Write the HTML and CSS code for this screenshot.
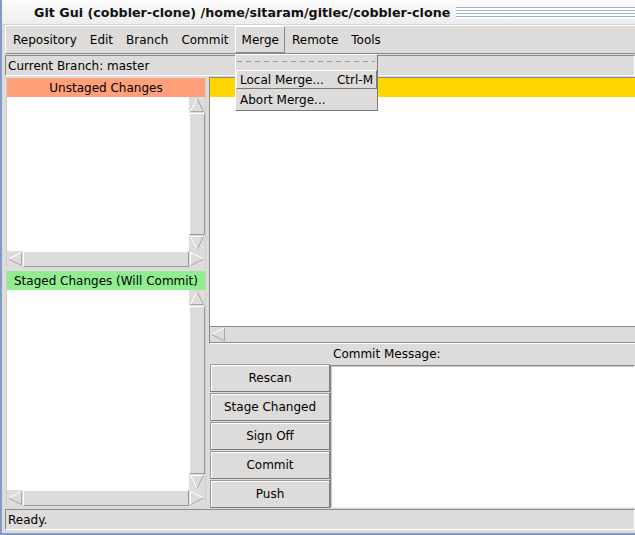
FILE: index.html
```html
<!DOCTYPE html>
<html>
<head>
<meta charset="utf-8">
<link rel="stylesheet" href="styles.css">
</head>
<body>
<div class="window">
  <div class="titlebar">
    <span class="title">Git Gui (cobbler-clone) /home/sitaram/gitlec/cobbler-clone</span>
    <span class="grip"></span>
  </div>
  <div class="content">
    <div class="menubar">
      <span class="mi">Repository</span>
      <span class="mi">Edit</span>
      <span class="mi">Branch</span>
      <span class="mi">Commit</span>
      <span class="mi active">Merge</span>
      <span class="mi">Remote</span>
      <span class="mi">Tools</span>
    </div>
    <div class="branchbar">Current Branch: master</div>
    <div class="main">
      <div class="left">
        <div class="pane upper">
          <div class="hdr unstaged">Unstaged Changes</div>
          <div class="listrow">
            <div class="list"></div>
            <div class="vscroll">
              <span class="arrow"><svg width="16" height="16" viewBox="0 0 16 16"><path d="M1.5 14.5 L8 1.5" stroke="#fff" fill="none"/><path d="M8 1.5 L14.5 14.5 H1.5" stroke="#a9a7a4" fill="none"/></svg></span>
              <span class="slider"></span>
              <span class="arrow"><svg width="16" height="16" viewBox="0 0 16 16"><path d="M14.5 1.5 H1.5 L8 14.5" stroke="#fff" fill="none"/><path d="M8 14.5 L14.5 1.5" stroke="#a9a7a4" fill="none"/></svg></span>
            </div>
          </div>
          <div class="hscroll">
            <span class="arrow"><svg width="16" height="16" viewBox="0 0 16 16"><path d="M14.5 1.5 L1.5 8" stroke="#fff" fill="none"/><path d="M1.5 8 L14.5 14.5 V1.5" stroke="#a9a7a4" fill="none"/></svg></span>
            <span class="slider"></span>
            <span class="arrow"><svg width="16" height="16" viewBox="0 0 16 16"><path d="M1.5 14.5 V1.5 L14.5 8" stroke="#fff" fill="none"/><path d="M14.5 8 L1.5 14.5" stroke="#a9a7a4" fill="none"/></svg></span>
          </div>
        </div>
        <div class="pane lower">
          <div class="hdr staged">Staged Changes (Will Commit)</div>
          <div class="listrow">
            <div class="list"></div>
            <div class="vscroll">
              <span class="arrow"><svg width="16" height="16" viewBox="0 0 16 16"><path d="M1.5 14.5 L8 1.5" stroke="#fff" fill="none"/><path d="M8 1.5 L14.5 14.5 H1.5" stroke="#a9a7a4" fill="none"/></svg></span>
              <span class="slider"></span>
              <span class="arrow"><svg width="16" height="16" viewBox="0 0 16 16"><path d="M14.5 1.5 H1.5 L8 14.5" stroke="#fff" fill="none"/><path d="M8 14.5 L14.5 1.5" stroke="#a9a7a4" fill="none"/></svg></span>
            </div>
          </div>
          <div class="hscroll">
            <span class="arrow"><svg width="16" height="16" viewBox="0 0 16 16"><path d="M14.5 1.5 L1.5 8" stroke="#fff" fill="none"/><path d="M1.5 8 L14.5 14.5 V1.5" stroke="#a9a7a4" fill="none"/></svg></span>
            <span class="slider"></span>
            <span class="arrow"><svg width="16" height="16" viewBox="0 0 16 16"><path d="M1.5 14.5 V1.5 L14.5 8" stroke="#fff" fill="none"/><path d="M14.5 8 L1.5 14.5" stroke="#a9a7a4" fill="none"/></svg></span>
          </div>
        </div>
      </div>
      <div class="right">
        <div class="diff">
          <div class="hdr diffhdr"></div>
          <div class="difftext"></div>
          <div class="hscroll diffscroll">
            <span class="arrow"><svg width="16" height="15" viewBox="0 0 16 15"><path d="M14.5 1 L1.5 7.5" stroke="#fff" fill="none"/><path d="M1.5 7.5 L14.5 14 V1" stroke="#a9a7a4" fill="none"/></svg></span>
            <span class="slider"></span>
          </div>
        </div>
        <div class="commit">
          <div class="cmlabel">Commit Message:</div>
          <div class="cmrow">
            <div class="buttons">
              <div class="btn">Rescan</div>
              <div class="btn">Stage Changed</div>
              <div class="btn">Sign Off</div>
              <div class="btn">Commit</div>
              <div class="btn">Push</div>
            </div>
            <div class="cmtext"></div>
          </div>
        </div>
      </div>
    </div>
    <div class="status">Ready.</div>
  </div>
  <div class="dropdown">
    <div class="tearoff"></div>
    <div class="mitem active"><span>Local Merge...</span><span>Ctrl-M</span></div>
    <div class="mitem"><span>Abort Merge...</span></div>
  </div>
</div>
</body>
</html>
```

FILE: styles.css
```css
* { box-sizing: border-box; }
html, body { margin: 0; padding: 0; }
body {
  width: 635px;
  height: 535px;
  overflow: hidden;
  background: #dedcda;
  font-family: "DejaVu Sans", sans-serif;
  font-size: 12px;
  color: #000;
}
.window {
  position: relative;
  width: 635px;
  height: 535px;
  display: flex;
  flex-direction: column;
  background: #dedcda;
  border-left: 2px solid #7f9bc6;
  border-bottom: 2px solid #7f9bc6;
}
.titlebar {
  height: 25px;
  flex: none;
  display: flex;
  align-items: center;
  background: linear-gradient(#fbfbfb, #ededed);
  border-bottom: 1px solid #d2d2d2;
}
.title {
  padding-left: 32px;
  font-weight: bold;
  font-size: 12.7px;
  white-space: nowrap;
  color: #111;
}
.grip {
  flex: 1;
  margin-left: 6px;
  height: 12px;
  margin-top: 1px;
  background: repeating-linear-gradient(to bottom, #9db2d2 0 1px, #ffffff 1px 3px);
}
.content {
  flex: 1;
  display: flex;
  flex-direction: column;
  padding-left: 3px;
  min-height: 0;
}
.menubar {
  height: 29px;
  flex: none;
  display: flex;
  align-items: stretch;
  border-top: 1px solid #fff;
  border-left: 1px solid #fff;
  border-bottom: 1px solid #8a8a8a;
}
.mi {
  display: flex;
  align-items: center;
  padding: 0 5px 0 6px;
  border: 1px solid transparent;
}
.mi.active {
  border-color: #fff #8a8a8a #8a8a8a #fff;
}
.branchbar {
  flex: none;
  margin-top: 1px;
  height: 21px;
  line-height: 21px;
  overflow: hidden;
  padding-left: 2px;
  border: 1px solid;
  border-color: #8a8a8a #fff #fff #8a8a8a;
}
.main {
  flex: 1;
  display: flex;
  margin-top: 1px;
  min-height: 0;
}
.left {
  width: 201px;
  flex: none;
  display: flex;
  flex-direction: column;
  padding: 1px 0 2px 1px;
}
.pane {
  display: flex;
  flex-direction: column;
  border-left: 1px solid #cfcdca;
  border-right: 1px solid #cfcdca;
}
.pane.upper { height: 189px; flex: none; margin-bottom: 4px; }
.pane.lower { flex: 1; }
.hdr {
  height: 19px;
  line-height: 21px;
  overflow: hidden;
  text-align: center;
  flex: none;
}
.unstaged { background: #ffa07a; }
.staged { background: #90ee90; }
.diffhdr { background: #ffd700; }
.listrow {
  flex: 1;
  display: flex;
  min-height: 0;
}
.list { flex: 1; background: #fff; }
.vscroll {
  width: 16px;
  flex: none;
  display: flex;
  flex-direction: column;
  background: #dedcda;
}
.hscroll {
  height: 16px;
  flex: none;
  display: flex;
  background: #dedcda;
}
.arrow {
  width: 16px;
  height: 16px;
  flex: none;
  display: block;
}
.arrow svg { display: block; }
.slider {
  flex: 1;
  border: 1px solid;
  border-color: #fff #9c9a97 #9c9a97 #fff;
}
.right {
  flex: 1;
  display: flex;
  flex-direction: column;
  margin-left: 3px;
  min-width: 0;
}
.diff {
  height: 267px;
  flex: none;
  display: flex;
  flex-direction: column;
  border-top: 1px solid #8a8a8a;
  border-left: 1px solid #8a8a8a;
  border-bottom: 1px solid #fff;
}
.difftext { flex: 1; background: #fff; }
.diffscroll {
  height: 17px;
  border-top: 1px solid #8a8a8a;
  border-bottom: 1px solid #8a8a8a;
}
.diffscroll .arrow { height: 15px; }
.diffscroll .slider { border-color: #dedcda; }
.commit {
  flex: 1;
  display: flex;
  flex-direction: column;
}
.cmlabel {
  height: 20px;
  line-height: 20px;
  padding-left: 124px;
  flex: none;
}
.cmrow {
  flex: 1;
  display: flex;
}
.buttons {
  width: 120px;
  flex: none;
  margin-left: 1px;
  display: flex;
  flex-direction: column;
  gap: 1px;
}
.btn {
  height: 28px;
  line-height: 26px;
  text-align: center;
  border: 1px solid;
  border-color: #9a9a9a #7a7a7a #7a7a7a #9a9a9a;
  box-shadow: inset 1px 1px 0 #fff;
}
.cmtext {
  flex: 1;
  margin-top: 1px;
  margin-bottom: 0;
  background: #fff;
  border: 1px solid;
  border-color: #8a8a8a #fff #eaeaea #8a8a8a;
  box-shadow: inset 1px 1px 0 #c8c8c8;
}
.status {
  flex: none;
  margin-top: 1px;
  margin-bottom: 3px;
  height: 21px;
  line-height: 21px;
  overflow: hidden;
  padding-left: 2px;
  border: 1px solid;
  border-color: #8a8a8a #fff #fff #8a8a8a;
}
.dropdown {
  position: absolute;
  left: 233px;
  top: 54px;
  width: 143px;
  height: 57px;
  background: #dedcda;
  border: 1px solid;
  border-color: #fff #7a7a7a #7a7a7a #fff;
  display: flex;
  flex-direction: column;
}
.tearoff {
  height: 15px;
  flex: none;
  background: repeating-linear-gradient(to right, #9a9a9a 0 5px, transparent 5px 9px) 1px 6px / 138px 1px no-repeat;
}
.mitem {
  height: 19px;
  display: flex;
  justify-content: space-between;
  align-items: center;
  padding: 0 3px;
  border: 1px solid transparent;
  margin-bottom: 1px;
}
.mitem.active {
  border-color: #fff #7a7a7a #7a7a7a #fff;
}
```
